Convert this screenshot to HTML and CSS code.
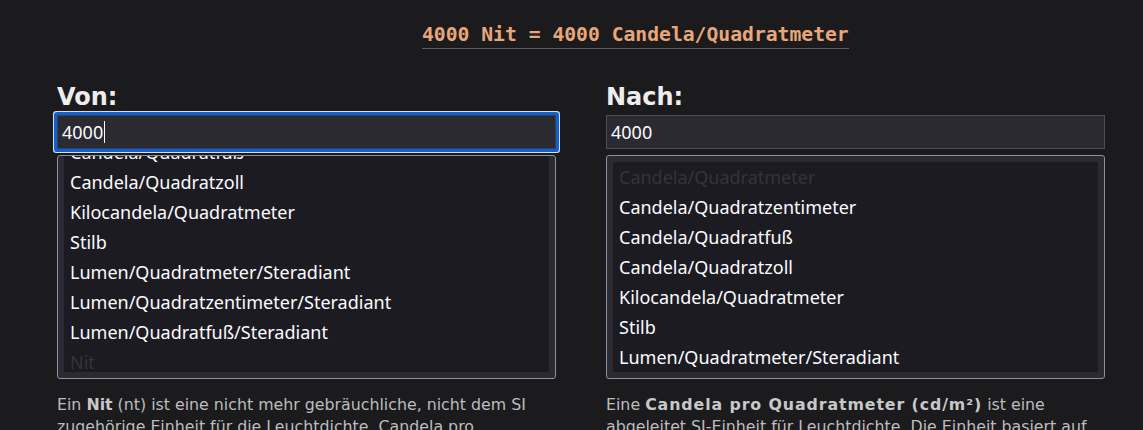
FILE: index.html
```html
<!DOCTYPE html>
<html lang="de">
<head>
<meta charset="utf-8">
<title>Nit in Candela/Quadratmeter</title>
<link rel="stylesheet" href="styles.css">
</head>
<body>
<main class="page">
  <h1 class="result"><span class="result-text">4000 Nit = 4000 Candela/Quadratmeter</span></h1>
  <div class="columns">
    <section class="col">
      <h2 class="label">Von:</h2>
      <div class="field focused"><span class="value">4000</span><span class="caret"></span></div>
      <div class="list list-scrolled">
        <div class="list-inner">
          <ul class="options scrolled">
            <li>Candela/Quadratmeter</li>
            <li>Candela/Quadratzentimeter</li>
            <li>Candela/Quadratfuß</li>
            <li>Candela/Quadratzoll</li>
            <li>Kilocandela/Quadratmeter</li>
            <li>Stilb</li>
            <li>Lumen/Quadratmeter/Steradiant</li>
            <li>Lumen/Quadratzentimeter/Steradiant</li>
            <li>Lumen/Quadratfuß/Steradiant</li>
            <li class="selected">Nit</li>
          </ul>
        </div>
      </div>
      <p class="desc">Ein <b>Nit</b> (nt) ist eine nicht mehr gebräuchliche, nicht dem SI zugehörige Einheit für die Leuchtdichte. Candela pro Quadratmeter ist die SI-Einheit.</p>
    </section>
    <section class="col">
      <h2 class="label">Nach:</h2>
      <div class="field"><span class="value">4000</span></div>
      <div class="list">
        <div class="list-inner">
          <ul class="options">
            <li class="selected">Candela/Quadratmeter</li>
            <li>Candela/Quadratzentimeter</li>
            <li>Candela/Quadratfuß</li>
            <li>Candela/Quadratzoll</li>
            <li>Kilocandela/Quadratmeter</li>
            <li>Stilb</li>
            <li>Lumen/Quadratmeter/Steradiant</li>
            <li>Lumen/Quadratzentimeter/Steradiant</li>
            <li>Lumen/Quadratfuß/Steradiant</li>
            <li>Nit</li>
          </ul>
        </div>
      </div>
      <p class="desc">Eine <b class="wide">Candela pro Quadratmeter (cd/m²)</b> ist eine abgeleitet SI-Einheit für Leuchtdichte. Die Einheit basiert auf der Candela.</p>
    </section>
  </div>
</main>
</body>
</html>
```
FILE: styles.css
```css
html, body {
  margin: 0;
  padding: 0;
  background: #1b1b1e;
  color: #e6e6e6;
  height: 100%;
  overflow: hidden;
}

.page {
  padding: 0 0 0 57px;
  width: 1048px;
}

.result {
  margin: 0;
  padding: 24px 0 0 365px;
  font-family: "DejaVu Sans Mono", "Liberation Mono", monospace;
  font-size: 19.7px;
  font-weight: bold;
  line-height: 22px;
  color: #e9a678;
}

.result-text {
  display: inline-block;
  padding-bottom: 2px;
  border-bottom: 1px solid #5e5e62;
}

.columns {
  display: grid;
  grid-template-columns: 499px 499px;
  column-gap: 50px;
  margin-top: 34px;
}

.label {
  margin: 0;
  font-family: "DejaVu Sans", Verdana, sans-serif;
  font-weight: bold;
  font-size: 24px;
  line-height: 28px;
  color: #ededed;
}

.field {
  box-sizing: border-box;
  height: 34px;
  margin-top: 4px;
  background: #2b2a33;
  border: 1px solid #4d4d55;
  padding: 0 4px;
  display: flex;
  align-items: center;
  font-family: "Noto Sans", sans-serif;
  font-size: 18px;
  line-height: 24px;
  color: #fbfbfe;
}

.field.focused {
  border-radius: 1px;
  box-shadow: 0 0 0 3px #0b62d6, 0 0 0 4px #dcdce6;
  border-color: #3e3e46;
}

.caret {
  display: inline-block;
  width: 1px;
  height: 22px;
  background: #fbfbfe;
  margin-left: 1px;
}

.list {
  box-sizing: border-box;
  height: 224px;
  margin-top: 6px;
  border: 1px solid #8f8f9d;
  border-radius: 3px;
  background: #2b2a33;
  padding: 6px;
}

.list.list-scrolled {
  padding-top: 0;
}

.list-inner {
  height: 100%;
  overflow: hidden;
  background: #1c1b22;
}

.options {
  list-style: none;
  margin: 0;
  padding: 0;
  font-family: "Noto Sans", sans-serif;
  font-size: 18px;
  line-height: 30px;
  color: #fbfbfe;
}

.options.scrolled {
  margin-top: -79px;
}

.options li {
  padding: 0 6px;
  white-space: nowrap;
}

.options li.selected {
  color: #34333c;
}

.desc {
  margin: 15px 0 0;
  font-family: "DejaVu Sans", Verdana, sans-serif;
  font-size: 15.8px;
  line-height: 22px;
  color: #bdbdbd;
}

.desc b {
  color: #c8c8c8;
}

.desc b.wide {
  letter-spacing: 0.9px;
}
```
